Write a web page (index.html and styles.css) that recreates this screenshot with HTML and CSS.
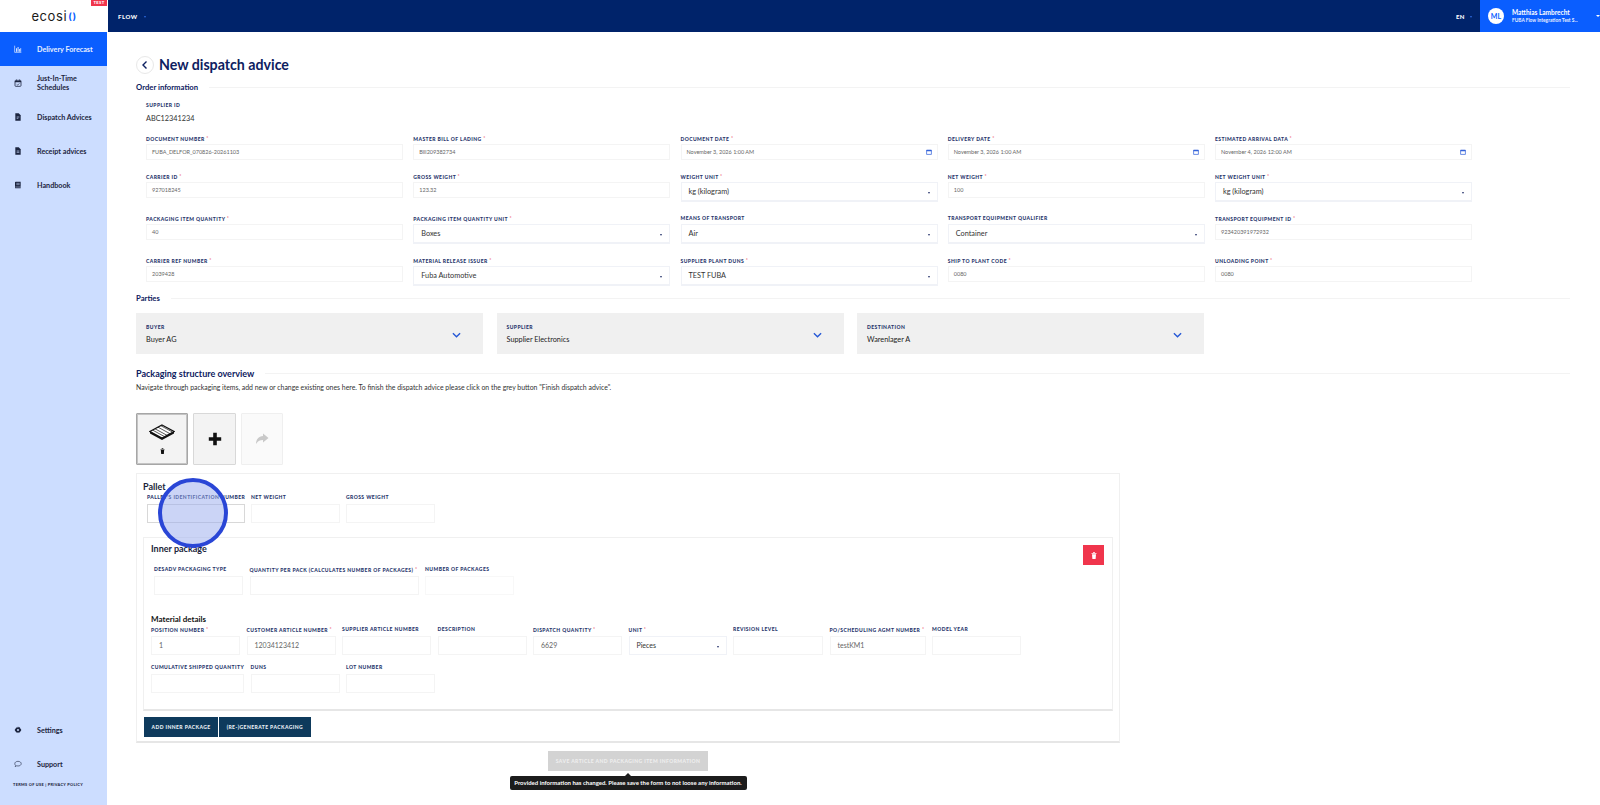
FILE: index.html
```html
<!DOCTYPE html>
<html>
<head>
  <meta charset="utf-8">
  <title>New dispatch advice</title>
  <link rel="stylesheet" href="styles.css">
</head>
<body>
  <div class="app">
    <div class="logo-box">
      <span class="logo">ecosi<span class="logo-o">()</span></span>
      <span class="test-tag">TEST</span>
    </div>

    <div class="topbar">
      <div class="topbar-flow">FLOW <span class="caret-blue"></span></div>
      <div class="topbar-right">
        <div class="lang">EN <span class="caret-blue"></span></div>
        <div class="user">
          <div class="avatar">ML</div>
          <div class="user-text">
            <div class="user-name">Matthias Lambrecht</div>
            <div class="user-org">FUBA Flow Integration Test S...</div>
          </div>
          <span class="caret-white"></span>
        </div>
      </div>
    </div>

    <div class="sidebar">
      <div class="nav-item active">
        <svg class="nav-icon" viewBox="0 0 12 12"><path d="M1 1v10h10" fill="none" stroke="currentColor" stroke-width="1"/><path d="M3 5h1.4v5H3zM5.4 3h1.4v7H5.400zM7.800 6h1.400v4H7.800zM9.700 4.500h1v5.500h-1z" fill="currentColor"/></svg>
        <span>Delivery Forecast</span>
      </div>
      <div class="nav-item">
        <svg class="nav-icon" viewBox="0 0 12 12"><rect x="1.500" y="2" width="9" height="9" rx="1.200" fill="none" stroke="currentColor" stroke-width="1.200"/><path d="M1.500 3h9v2h-9zM3.300.8h1v2h-1zM7.700.8h1v2h-1z" fill="currentColor"/><path d="M4 8l1.400 1.200L8 6.600" fill="none" stroke="currentColor" stroke-width="1"/></svg>
        <span>Just-In-Time<br>Schedules</span>
      </div>
      <div class="nav-item">
        <svg class="nav-icon" viewBox="0 0 12 12"><path d="M2 .5h5l3 3v8H2z" fill="currentColor"/><path d="M4 6h4M4 8h2.500" stroke="#ccddff" stroke-width="1"/></svg>
        <span>Dispatch Advices</span>
      </div>
      <div class="nav-item">
        <svg class="nav-icon" viewBox="0 0 12 12"><path d="M2 .5h5l3 3v8H2z" fill="currentColor"/><path d="M4 6h4M4 8h4" stroke="#ccddff" stroke-width="1"/></svg>
        <span>Receipt advices</span>
      </div>
      <div class="nav-item">
        <svg class="nav-icon" viewBox="0 0 12 12"><path d="M2.500 1h7.500v10H2.500a1 1 0 0 1-1-1V2a1 1 0 0 1 1-1z" fill="currentColor"/><path d="M3.500 3.500h5M3.500 5.500h5M2 9h8" stroke="#ccddff" stroke-width=".8"/></svg>
        <span>Handbook</span>
      </div>
      <div class="sidebar-bottom">
        <div class="nav-item">
          <svg class="nav-icon" viewBox="0 0 12 12"><path d="M6 .8l1.100 1.500 1.800-.4.400 1.800L11 5l-.9 1 .9 1-1.700 1.100-.4 1.800-1.800-.4L6 11l-1.100-1.500-1.800.4-.4-1.800L1 7l.9-1L1 5l1.700-1.100.4-1.800 1.800.4z" fill="currentColor"/><circle cx="6" cy="6" r="1.500" fill="#ccddff"/></svg>
          <span>Settings</span>
        </div>
        <div class="nav-item">
          <svg class="nav-icon" viewBox="0 0 12 12"><path d="M6 2c2.800 0 4.800 1.500 4.800 3.500S8.800 9 6 9c-.7 0-1.300-.1-1.900-.3L1.800 10l.6-2C1.500 7.300 1.200 6.400 1.200 5.500 1.200 3.500 3.200 2 6 2z" fill="none" stroke="currentColor" stroke-width=".9"/></svg>
          <span>Support</span>
        </div>
        <div class="terms">TERMS OF USE | PRIVACY POLICY</div>
      </div>
    </div>

    <div class="main">
      <div class="page-title">
        <div class="back-btn">
          <svg viewBox="0 0 10 10" width="10" height="10"><path d="M6.500 1.500L3 5l3.500 3.500" fill="none" stroke="#0d2060" stroke-width="1.400"/></svg>
        </div>
        <h1>New dispatch advice</h1>
      </div>

      <h2 class="section-head order-head">Order information</h2>

      <div class="order-form">
        <div class="supplier">
          <div class="label">SUPPLIER ID</div>
          <div class="plain-value">ABC12341234</div>
        </div>

        <div class="order-grid">
          <div><div class="label">DOCUMENT NUMBER <i>*</i></div><div class="input">FUBA_DELFOR_070826-20261103</div></div>
          <div><div class="label">MASTER BILL OF LADING <i>*</i></div><div class="input">Bill209382734</div></div>
          <div><div class="label">DOCUMENT DATE <i>*</i></div><div class="input date">November 3, 2026 1:00 AM<svg class="cal" viewBox="0 0 8 8"><path d="M.8 1.500h6.400v5.700H.8z" fill="none" stroke="#2457d6" stroke-width=".9"/><path d="M.8 1.500h6.400v1.500H.8z" fill="#2457d6"/></svg></div></div>
          <div><div class="label">DELIVERY DATE <i>*</i></div><div class="input date">November 3, 2026 1:00 AM<svg class="cal" viewBox="0 0 8 8"><path d="M.8 1.500h6.400v5.700H.8z" fill="none" stroke="#2457d6" stroke-width=".9"/><path d="M.8 1.500h6.400v1.500H.8z" fill="#2457d6"/></svg></div></div>
          <div><div class="label">ESTIMATED ARRIVAL DATA <i>*</i></div><div class="input date">November 4, 2026 12:00 AM<svg class="cal" viewBox="0 0 8 8"><path d="M.8 1.500h6.400v5.700H.8z" fill="none" stroke="#2457d6" stroke-width=".9"/><path d="M.8 1.500h6.400v1.500H.8z" fill="#2457d6"/></svg></div></div>

          <div><div class="label">CARRIER ID <i>*</i></div><div class="input">927018245</div></div>
          <div><div class="label">GROSS WEIGHT <i>*</i></div><div class="input">123.32</div></div>
          <div><div class="label">WEIGHT UNIT <i>*</i></div><div class="select">kg (kilogram)</div></div>
          <div><div class="label">NET WEIGHT <i>*</i></div><div class="input">100</div></div>
          <div><div class="label">NET WEIGHT UNIT <i>*</i></div><div class="select">kg (kilogram)</div></div>

          <div><div class="label">PACKAGING ITEM QUANTITY <i>*</i></div><div class="input">40</div></div>
          <div><div class="label">PACKAGING ITEM QUANTITY UNIT <i>*</i></div><div class="select">Boxes</div></div>
          <div><div class="label">MEANS OF TRANSPORT</div><div class="select">Air</div></div>
          <div><div class="label">TRANSPORT EQUIPMENT QUALIFIER</div><div class="select">Container</div></div>
          <div><div class="label">TRANSPORT EQUIPMENT ID <i>*</i></div><div class="input">923420391972932</div></div>

          <div><div class="label">CARRIER REF NUMBER <i>*</i></div><div class="input">2039428</div></div>
          <div><div class="label">MATERIAL RELEASE ISSUER <i>*</i></div><div class="select">Fuba Automotive</div></div>
          <div><div class="label">SUPPLIER PLANT DUNS <i>*</i></div><div class="select">TEST FUBA</div></div>
          <div><div class="label">SHIP TO PLANT CODE <i>*</i></div><div class="input">0080</div></div>
          <div><div class="label">UNLOADING POINT <i>*</i></div><div class="input">0080</div></div>
        </div>
      </div>

      <h2 class="section-head parties-head">Parties</h2>
      <div class="parties">
        <div class="party">
          <div><div class="label">BUYER</div><div class="party-name">Buyer AG</div></div>
          <svg class="chevron" viewBox="0 0 10 6"><path d="M1 1l4 4 4-4" fill="none" stroke="#2457d6" stroke-width="1.500"/></svg>
        </div>
        <div class="party">
          <div><div class="label">SUPPLIER</div><div class="party-name">Supplier Electronics</div></div>
          <svg class="chevron" viewBox="0 0 10 6"><path d="M1 1l4 4 4-4" fill="none" stroke="#2457d6" stroke-width="1.500"/></svg>
        </div>
        <div class="party">
          <div><div class="label">DESTINATION</div><div class="party-name">Warenlager A</div></div>
          <svg class="chevron" viewBox="0 0 10 6"><path d="M1 1l4 4 4-4" fill="none" stroke="#2457d6" stroke-width="1.500"/></svg>
        </div>
      </div>

      <h2 class="section-head packaging-head">Packaging structure overview</h2>
      <p class="packaging-note">Navigate through packaging items, add new or change existing ones here. To finish the dispatch advice please click on the grey button "Finish dispatch advice".</p>

      <div class="pack-tree">
        <div class="tree-btn tree-pallet">
          <svg class="pallet-icon" viewBox="0 0 26 17">
            <path d="M13 1L25 7.500 13 14 1 7.500z" fill="#fff" stroke="#111" stroke-width="1.200"/>
            <path d="M9 3.200l12 6.500M6 4.800l12 6.500M12 1.800l11 6M4 6.300l11 6" stroke="#111" stroke-width=".7" fill="none"/>
            <path d="M1 7.500v2L13 16l12-6.500v-2L13 14z" fill="#111"/>
          </svg>
          <svg class="trash-icon" viewBox="0 0 6 7"><path d="M.5 1h5v.8h-5zM2 .3h2V1H2zM1 2.200h4L4.600 7H1.400z" fill="#111"/></svg>
        </div>
        <div class="tree-btn tree-plus">
          <svg viewBox="0 0 14 14" width="14" height="14"><path d="M5.200.8h3.600v4.400h4.400v3.600H8.800v4.400H5.200V8.800H.8V5.200h4.400z" fill="#111"/></svg>
        </div>
        <div class="tree-btn tree-next">
          <svg viewBox="0 0 14 12" width="14" height="12"><path d="M8 .5L13.500 5 8 9.500V7C5 7 3 7.800 1 11c0-4.500 2.500-7.500 7-8z" fill="#c9c9c9"/></svg>
        </div>
      </div>

      <div class="pallet-card">
        <h3 class="card-title">Pallet</h3>
        <div class="field-row pallet-fields">
          <div class="w98"><div class="label">PALLET'S IDENTIFICATION NUMBER</div><div class="cell cell-dark"></div></div>
          <div class="w89"><div class="label">NET WEIGHT</div><div class="cell"></div></div>
          <div class="w89"><div class="label">GROSS WEIGHT</div><div class="cell"></div></div>
        </div>

        <div class="inner-card">
          <div class="inner-head">
            <h3 class="card-title">Inner package</h3>
            <div class="delete-btn">
              <svg viewBox="0 0 6 7" width="6" height="7"><path d="M.5 1h5v.8h-5zM2 .3h2V1H2zM1 2.200h4L4.600 7H1.400z" fill="#fff"/></svg>
            </div>
          </div>
          <div class="field-row inner-fields">
            <div class="w89"><div class="label">DESADV PACKAGING TYPE</div><div class="cell"></div></div>
            <div class="w169"><div class="label">QUANTITY PER PACK (CALCULATES NUMBER OF PACKAGES) <i>*</i></div><div class="cell"></div></div>
            <div class="w89"><div class="label">NUMBER OF PACKAGES</div><div class="cell cell-faint"></div></div>
          </div>

          <h4 class="material-title">Material details</h4>
          <div class="field-row">
            <div class="w89"><div class="label">POSITION NUMBER <i>*</i></div><div class="cell">1</div></div>
            <div class="w89"><div class="label">CUSTOMER ARTICLE NUMBER <i>*</i></div><div class="cell">12034123412</div></div>
            <div class="w89"><div class="label">SUPPLIER ARTICLE NUMBER</div><div class="cell"></div></div>
            <div class="w89"><div class="label">DESCRIPTION</div><div class="cell"></div></div>
            <div class="w89"><div class="label">DISPATCH QUANTITY <i>*</i></div><div class="cell">6629</div></div>
            <div class="w98"><div class="label">UNIT <i>*</i></div><div class="cell cell-select">Pieces</div></div>
            <div class="w90"><div class="label">REVISION LEVEL</div><div class="cell"></div></div>
            <div class="w96"><div class="label">PO/SCHEDULING AGMT NUMBER <i>*</i></div><div class="cell">testKM1</div></div>
            <div class="w89"><div class="label">MODEL YEAR</div><div class="cell"></div></div>
          </div>
          <div class="field-row second-row">
            <div class="w93"><div class="label">CUMULATIVE SHIPPED QUANTITY</div><div class="cell"></div></div>
            <div class="w89"><div class="label">DUNS</div><div class="cell"></div></div>
            <div class="w89"><div class="label">LOT NUMBER</div><div class="cell"></div></div>
          </div>
        </div>

        <div class="card-actions">
          <div class="dark-btn">ADD INNER PACKAGE</div>
          <div class="dark-btn">(RE-)GENERATE PACKAGING</div>
        </div>
      </div>

      <div class="save-area">
        <div class="save-btn">SAVE ARTICLE AND PACKAGING ITEM INFORMATION</div>
        <div class="save-tip">Provided information has changed. Please save the form to not loose any information.</div>
      </div>
    </div>
  </div>

  <div class="click-marker"></div>
</body>
</html>
```

FILE: styles.css
```css
html, body {
  margin: 0;
  height: 100%;
  overflow: hidden;
}

body {
  font-family: Lato, "Open Sans", sans-serif;
  background: #fff;
  color: #222;
}

h1, h2, h3, h4, p {
  margin: 0;
}

.app {
  display: grid;
  grid-template-columns: 107px 1fr;
  grid-template-rows: 32px 1fr;
  height: 805px;
}

/* top row */
.logo-box {
  position: relative;
  background: #fff;
  display: flex;
  align-items: center;
  justify-content: center;
}

.logo {
  font-family: Inter, sans-serif;
  font-size: 13px;
  letter-spacing: 0.6px;
  color: #1a1a1a;
  margin-left: 1px;
}

.logo-o {
  font-size: 9.500px;
  color: #0a5eff;
  font-weight: 700;
  margin-left: 1px;
  vertical-align: 1px;
}

.test-tag {
  position: absolute;
  top: 0;
  right: 0;
  background: #f0354c;
  color: #fff;
  font-size: 4.200px;
  font-weight: 900;
  letter-spacing: 0.3px;
  padding: 0 2.500px;
  line-height: 6px;
}

.topbar {
  background: #00236a;
  margin-left: 1px;
  display: flex;
  justify-content: space-between;
  align-items: stretch;
  color: #fff;
}

.topbar-flow {
  display: flex;
  align-items: center;
  gap: 6px;
  padding-left: 10px;
  font-size: 6px;
  font-weight: 900;
  letter-spacing: 0.5px;
}

.topbar-right {
  display: flex;
  align-items: stretch;
}

.lang {
  display: flex;
  align-items: center;
  gap: 5px;
  font-size: 6px;
  font-weight: 900;
  letter-spacing: 0.5px;
  margin-right: 8px;
}

.caret-blue {
  width: 0;
  height: 0;
  margin-top: 1px;
  border-left: 1.500px solid transparent;
  border-right: 1.500px solid transparent;
  border-top: 2px solid #2f6be0;
}

.user {
  width: 120px;
  background: #0a5eff;
  display: flex;
  align-items: center;
  box-sizing: border-box;
  padding-left: 8px;
}

.avatar {
  width: 16px;
  height: 16px;
  border-radius: 50%;
  background: #fff;
  color: #0a5eff;
  font-size: 7px;
  font-weight: 700;
  text-align: center;
  line-height: 16px;
  flex-shrink: 0;
}

.user-text {
  margin-left: 8px;
  width: 76px;
}

.user-name {
  font-size: 6.500px;
  font-weight: 700;
  line-height: 8px;
}

.user-org {
  font-size: 4.800px;
  font-weight: 700;
  line-height: 6px;
  white-space: nowrap;
  opacity: 0.9;
}

.caret-white {
  width: 0;
  height: 0;
  margin-left: 8px;
  border-left: 2px solid transparent;
  border-right: 2px solid transparent;
  border-top: 2.500px solid #fff;
}

/* sidebar */
.sidebar {
  background: #ccddff;
  display: flex;
  flex-direction: column;
}

.nav-item {
  height: 34px;
  display: flex;
  align-items: center;
  font-size: 7.200px;
  font-weight: 700;
  line-height: 9px;
  color: #1c2540;
  flex-shrink: 0;
}

.nav-item.active {
  background: #0a5eff;
  color: #e8f0ff;
}

.nav-icon {
  width: 8px;
  height: 8px;
  margin-left: 14px;
  margin-right: 15px;
  flex-shrink: 0;
}

.sidebar-bottom {
  margin-top: auto;
  padding-bottom: 17px;
}

.terms {
  font-size: 3.900px;
  font-weight: 900;
  letter-spacing: 0.3px;
  color: #1c2540;
  padding-left: 13px;
  margin-top: 1px;
  line-height: 6px;
}

/* main */
.main {
  padding: 24px 30px 0 29px;
}

.page-title {
  display: flex;
  align-items: center;
  gap: 5px;
  height: 18px;
}

.page-title h1 {
  font-size: 14.200px;
  line-height: 16px;
  font-weight: 700;
  color: #0d2060;
  margin-top: -1px;
}

.back-btn {
  width: 18px;
  height: 18px;
  border-radius: 50%;
  border: 1px solid #e8e8e8;
  box-sizing: border-box;
  display: flex;
  align-items: center;
  justify-content: center;
}

.section-head {
  display: flex;
  align-items: center;
  gap: 11px;
  height: 12px;
  font-size: 7.700px;
  font-weight: 700;
  color: #0d2060;
  white-space: nowrap;
}

.section-head::after {
  content: "";
  flex: 1;
  height: 1px;
  background: #f3f3f3;
}

.order-head {
  margin-top: 7px;
}

.order-form {
  padding: 8px 0 0 10px;
}

.label {
  font-size: 5px;
  font-weight: 900;
  letter-spacing: 0.43px;
  line-height: 8px;
  height: 10px;
  color: #27356b;
  white-space: nowrap;
}

.label i {
  color: #e8324a;
  font-style: normal;
  font-weight: 400;
  vertical-align: 1px;
}

.plain-value {
  font-size: 7.300px;
  line-height: 16px;
  color: #333;
}

.supplier {
  margin-bottom: 7px;
}

.order-grid {
  display: grid;
  grid-template-columns: repeat(5, 257px);
  column-gap: 10.250px;
  row-gap: 12px;
}

.input {
  height: 16px;
  box-sizing: border-box;
  border: 1px solid #f4f4f4;
  padding-left: 5px;
  font-size: 5.500px;
  line-height: 14px;
  color: #666;
  display: flex;
  justify-content: space-between;
  align-items: center;
}

.cal {
  width: 6px;
  height: 6px;
  margin-right: 5px;
}

.select {
  height: 20px;
  box-sizing: border-box;
  border: 1px solid #f0f2f7;
  border-bottom-width: 2px;
  padding: 0 5px 0 7px;
  font-size: 7.300px;
  line-height: 18px;
  color: #333;
  position: relative;
}

.select::after,
.cell-select::after {
  content: "";
  position: absolute;
  top: 9px;
  right: 7px;
  border-left: 1.500px solid transparent;
  border-right: 1.500px solid transparent;
  border-top: 2px solid #26336b;
}

.parties-head {
  margin-top: 6px;
}

.parties {
  display: flex;
  gap: 13.500px;
  margin-top: 9px;
}

.party {
  width: 347px;
  height: 41px;
  background: #f0f0f0;
  box-sizing: border-box;
  padding: 10px 22px 0 10px;
  display: flex;
  justify-content: space-between;
}

.party-name {
  font-size: 7.300px;
  line-height: 12px;
  margin-top: 1px;
  color: #222;
}

.chevron {
  width: 9px;
  height: 6px;
  margin-top: 9px;
}

.packaging-head {
  margin-top: 13px;
  font-size: 9px;
}

.packaging-note {
  font-size: 6.900px;
  line-height: 10px;
  margin-top: 3px;
  color: #333;
}

.pack-tree {
  display: flex;
  gap: 5px;
  margin-top: 21px;
}

.tree-btn {
  height: 52px;
  box-sizing: border-box;
  background: #f3f3f3;
  border: 1px solid #d8d8d8;
  border-radius: 1px;
  display: flex;
  flex-direction: column;
  align-items: center;
  justify-content: center;
}

.tree-pallet {
  width: 52px;
  border: 1px solid #a6a6a6;
  box-shadow: inset 0 0 0 1px #c4c4c4;
}

.pallet-icon {
  width: 26px;
  height: 17px;
}

.trash-icon {
  width: 5px;
  height: 6px;
  margin-top: 7px;
}

.tree-plus {
  width: 43px;
}

.tree-next {
  width: 42px;
  background: #fafafa;
  border-color: #efefef;
}

.pallet-card {
  margin-top: 8px;
  width: 984px;
  height: 270px;
  box-sizing: border-box;
  border: 1px solid #f0f0f0;
  border-bottom: 2px solid #e6e6e6;
  padding: 7px 6px 0 6px;
}

.card-title {
  font-size: 9px;
  font-weight: 700;
  line-height: 12px;
  color: #1b1f3a;
}

.field-row {
  display: flex;
  gap: 6.500px;
}

.pallet-fields {
  padding-left: 4px;
  gap: 6px;
}

.pallet-fields .label,
.inner-fields .label,
.field-row .label {
  height: 11px;
  line-height: 8px;
}

.cell {
  height: 19px;
  box-sizing: border-box;
  border: 1px solid #f4f4f4;
  padding-left: 7px;
  font-size: 7px;
  line-height: 17px;
  color: #666;
  position: relative;
}

.cell-dark {
  border-color: #d8d8d8;
}

.cell-faint {
  border-color: #f8f8f8;
}

.cell-select {
  color: #333;
  border-color: #f0f2f7;
}

.w89 { width: 89px; }
.w90 { width: 90px; }
.w93 { width: 93px; }
.w96 { width: 96px; }
.w98 { width: 98px; }
.w169 { width: 169px; }

.inner-card {
  margin-top: 14px;
  height: 174px;
  box-sizing: border-box;
  border: 1px solid #f0f0f0;
  border-bottom: 2px solid #e6e6e6;
  padding: 5px 8px 0 7px;
}

.inner-head {
  display: flex;
  justify-content: space-between;
  align-items: flex-start;
  height: 22px;
}

.delete-btn {
  width: 21px;
  height: 20px;
  margin-top: 2px;
  background: #f0354c;
  display: flex;
  align-items: center;
  justify-content: center;
}

.inner-fields {
  padding-left: 3px;
}

.material-title {
  margin-top: 19px;
  font-size: 8px;
  font-weight: 700;
  line-height: 11px;
  color: #111;
}

.second-row {
  margin-top: 8px;
}

.card-actions {
  display: flex;
  gap: 1px;
  margin-top: 6px;
  margin-left: 1px;
}

.dark-btn {
  height: 20px;
  padding: 0 7.500px;
  background: #0e3a5c;
  color: #e8eef4;
  font-size: 5px;
  font-weight: 900;
  letter-spacing: 0.43px;
  line-height: 20px;
}

.save-area {
  width: 984px;
  display: flex;
  flex-direction: column;
  align-items: center;
}

.save-btn {
  margin-top: 8px;
  width: 160px;
  height: 20px;
  background: #d3d3d3;
  color: #eeeeee;
  font-size: 5px;
  font-weight: 900;
  letter-spacing: 0.43px;
  line-height: 20px;
  text-align: center;
  white-space: nowrap;
}

.save-tip {
  position: relative;
  margin-top: 5px;
  width: 237px;
  height: 14px;
  border-radius: 2px;
  background: #1c1c1c;
  color: #fff;
  font-size: 6px;
  font-weight: 700;
  line-height: 14px;
  text-align: center;
  white-space: nowrap;
}

.save-tip::before {
  content: "";
  position: absolute;
  top: -3px;
  left: 50%;
  margin-left: -3px;
  border-left: 3px solid transparent;
  border-right: 3px solid transparent;
  border-bottom: 3px solid #1c1c1c;
}

/* recording click marker over the form */
.click-marker {
  position: absolute;
  left: 158px;
  top: 478px;
  width: 70px;
  height: 70px;
  box-sizing: border-box;
  border: 4px solid #2a46d6;
  border-radius: 50%;
  background: rgba(152, 170, 238, 0.5);
}
```
